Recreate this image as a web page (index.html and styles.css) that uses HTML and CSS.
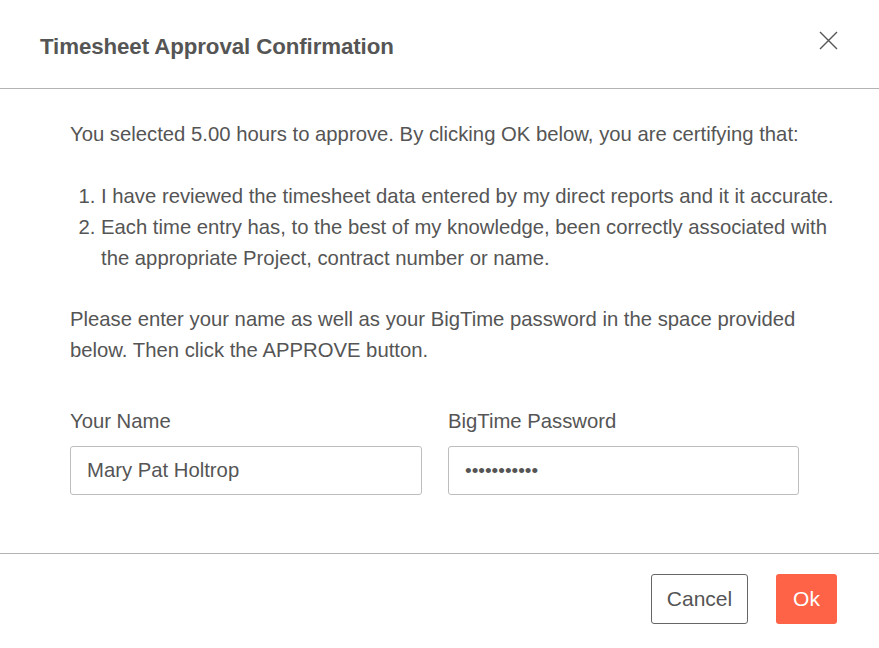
FILE: index.html
```html
<!DOCTYPE html>
<html>
<head>
<meta charset="utf-8">
<link rel="stylesheet" href="styles.css">
</head>
<body>
<div class="dialog">
  <div class="header">
    <h1 class="title">Timesheet Approval Confirmation</h1>
    <button class="close" aria-label="Close">
      <svg width="19" height="19" viewBox="0 0 19 19"><path d="M1 1L18 18M18 1L1 18" stroke="#555" stroke-width="1.4" fill="none"/></svg>
    </button>
  </div>
  <div class="body">
    <p class="para">You selected 5.00 hours to approve. By clicking OK below, you are certifying that:</p>
    <ol class="list">
      <li>I have reviewed the timesheet data entered by my direct reports and it it accurate.</li>
      <li>Each time entry has, to the best of my knowledge, been correctly associated with the appropriate Project, contract number or name.</li>
    </ol>
    <p class="para">Please enter your name as well as your BigTime password in the space provided below. Then click the APPROVE button.</p>
    <div class="fields">
      <label class="field">
        <span class="label">Your Name</span>
        <input class="input" type="text" value="Mary Pat Holtrop">
      </label>
      <label class="field">
        <span class="label">BigTime Password</span>
        <input class="input pw" type="password" value="abcdefghijk">
      </label>
    </div>
  </div>
  <div class="footer">
    <button class="btn cancel">Cancel</button>
    <button class="btn ok">Ok</button>
  </div>
</div>
</body>
</html>
```
FILE: styles.css
```css
* { box-sizing: border-box; }
html, body { margin: 0; padding: 0; background: #fff; }
body {
  font-family: "Liberation Sans", Arial, sans-serif;
  color: #555;
  width: 879px;
  height: 648px;
  overflow: hidden;
}
.header {
  height: 89px;
  border-bottom: 1px solid #b3b3b3;
  display: flex;
  align-items: center;
  justify-content: space-between;
  padding: 6px 41px 0 40px;
}
.title {
  margin: 0;
  font-size: 22.3px;
  font-weight: bold;
  color: #555;
  letter-spacing: -0.1px;
}
.close {
  background: none;
  border: 0;
  padding: 0;
  width: 19px;
  height: 19px;
  margin-top: -13px;
  display: flex;
}
.body {
  padding: 30px 36px 0 70px;
  font-size: 20.3px;
  line-height: 31px;
}
.para { margin: 0 0 31px; }
.list {
  margin: 0 0 30px;
  padding-left: 31px;
}
.fields {
  display: grid;
  grid-template-columns: 352px 351px;
  gap: 26px;
  margin-top: 43px;
}
.field { display: flex; flex-direction: column; }
.label {
  line-height: 24px;
  margin-bottom: 13px;
}
.input {
  height: 49px;
  border: 1px solid #bdbdbd;
  border-radius: 3px;
  padding: 0 16px;
  font-family: inherit;
  font-size: 20.3px;
  color: #555;
  outline: none;
}
.pw { font-size: 19px; letter-spacing: 0px; }
.footer {
  margin-top: 58px;
  border-top: 1px solid #b3b3b3;
  display: flex;
  justify-content: flex-end;
  gap: 28px;
  padding: 20px 42px 0 0;
}
.btn {
  height: 50px;
  font-family: inherit;
  font-size: 21px;
  border-radius: 3px;
  padding: 0;
}
.cancel {
  width: 97px;
  background: #fff;
  border: 1px solid #666;
  color: #555;
}
.ok {
  width: 61px;
  background: #ff6347;
  border: 0;
  color: #fff;
}
```
